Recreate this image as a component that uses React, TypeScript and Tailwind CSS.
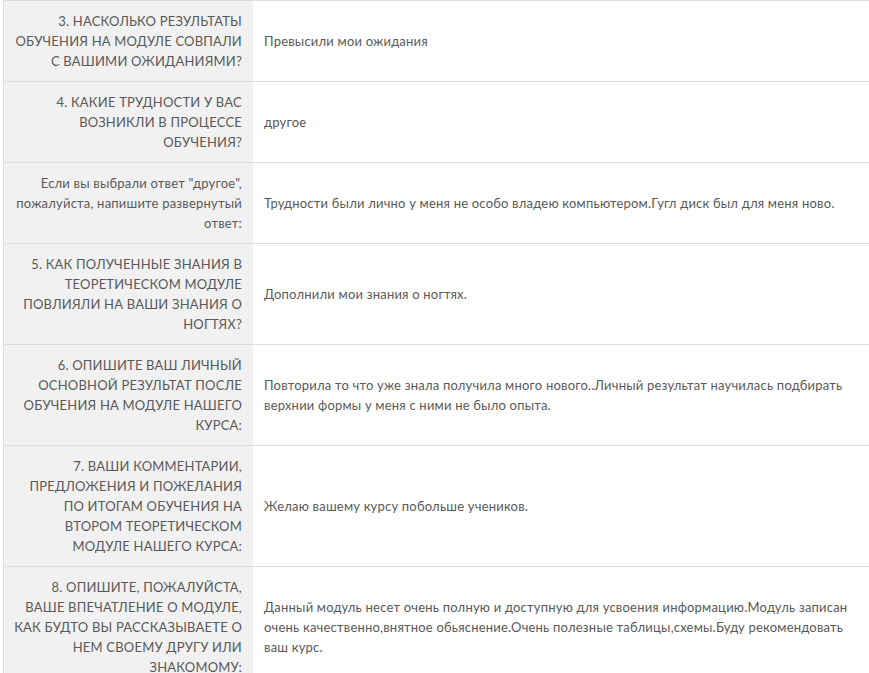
import React from "react";

const rows: { q: string[]; a: string[] }[] = [
  {
    q: ["3. НАСКОЛЬКО РЕЗУЛЬТАТЫ", "ОБУЧЕНИЯ НА МОДУЛЕ СОВПАЛИ", "С ВАШИМИ ОЖИДАНИЯМИ?"],
    a: ["Превысили мои ожидания"],
  },
  {
    q: ["4. КАКИЕ ТРУДНОСТИ У ВАС", "ВОЗНИКЛИ В ПРОЦЕССЕ", "ОБУЧЕНИЯ?"],
    a: ["другое"],
  },
  {
    q: ["Если вы выбрали ответ \"другое\",", "пожалуйста, напишите развернутый", "ответ:"],
    a: ["Трудности были лично у меня не особо владею компьютером.Гугл диск был для меня ново."],
  },
  {
    q: ["5. КАК ПОЛУЧЕННЫЕ ЗНАНИЯ В", "ТЕОРЕТИЧЕСКОМ МОДУЛЕ", "ПОВЛИЯЛИ НА ВАШИ ЗНАНИЯ О", "НОГТЯХ?"],
    a: ["Дополнили мои знания о ногтях."],
  },
  {
    q: ["6. ОПИШИТЕ ВАШ ЛИЧНЫЙ", "ОСНОВНОЙ РЕЗУЛЬТАТ ПОСЛЕ", "ОБУЧЕНИЯ НА МОДУЛЕ НАШЕГО", "КУРСА:"],
    a: [
      "Повторила то что уже знала получила много нового..Личный результат научилась подбирать",
      "верхнии формы у меня с ними не было опыта.",
    ],
  },
  {
    q: [
      "7. ВАШИ КОММЕНТАРИИ,",
      "ПРЕДЛОЖЕНИЯ И ПОЖЕЛАНИЯ",
      "ПО ИТОГАМ ОБУЧЕНИЯ НА",
      "ВТОРОМ ТЕОРЕТИЧЕСКОМ",
      "МОДУЛЕ НАШЕГО КУРСА:",
    ],
    a: ["Желаю вашему курсу побольше учеников."],
  },
  {
    q: [
      "8. ОПИШИТЕ, ПОЖАЛУЙСТА,",
      "ВАШЕ ВПЕЧАТЛЕНИЕ О МОДУЛЕ,",
      "КАК БУДТО ВЫ РАССКАЗЫВАЕТЕ О",
      "НЕМ СВОЕМУ ДРУГУ ИЛИ",
      "ЗНАКОМОМУ:",
    ],
    a: [
      "Данный модуль несет очень полную и доступную для усвоения информацию.Модуль записан",
      "очень качественно,внятное обьяснение.Очень полезные таблицы,схемы.Буду рекомендовать",
      "ваш курс.",
    ],
  },
];

export default function App() {
  return (
    <div
      className="bg-white w-[869px] h-[673px] overflow-hidden pl-[3px] text-[13px] leading-[20px] text-[#595959]"
      style={{ fontFamily: "Lato, 'Open Sans', sans-serif" }}
    >
      <div className="border-t border-[#ddd]">
        {rows.map((r, i) => (
          <div key={i} className="flex border-b border-[#ddd]">
            <div className="w-[250px] shrink-0 bg-[#f1f1f1] border-l border-[#ddd] py-[10px] pl-[2px] pr-[11px] text-right tracking-[0.2px]">
              {r.q.map((l, j) => (
                <div key={j} className="whitespace-nowrap">
                  {l}
                </div>
              ))}
            </div>
            <div className="flex-1 flex flex-col justify-center py-[10px] pl-[11px] pr-2 tracking-[0.2px]">
              {r.a.map((l, j) => (
                <div key={j} className="whitespace-nowrap">
                  {l}
                </div>
              ))}
            </div>
          </div>
        ))}
      </div>
    </div>
  );
}
